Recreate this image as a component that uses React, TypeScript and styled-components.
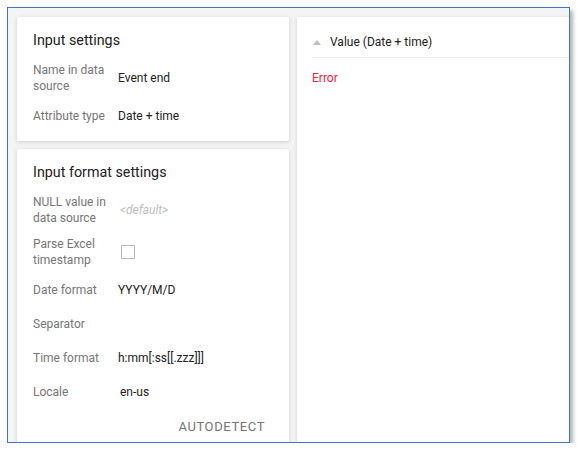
import React from "react";
import styled, { createGlobalStyle } from "styled-components";

const GlobalStyle = createGlobalStyle`
  html, body {
    margin: 0;
    padding: 0;
    background: #ffffff;
    font-family: Roboto, "Liberation Sans", Arial, sans-serif;
  }
`;

const Frame = styled.div`
  box-sizing: border-box;
  margin: 7px 0 0 7px;
  width: 563px;
  height: 436px;
  border: 1px solid #4472c4;
  box-shadow: 3px 3px 4px rgba(0, 0, 0, 0.3);
  background: #f4f4f4;
  overflow: hidden;
  display: flex;
  gap: 8px;
  padding: 9px 0 0 9px;
`;

const LeftColumn = styled.div`
  width: 272px;
  flex-shrink: 0;
  display: flex;
  flex-direction: column;
  gap: 8px;
`;

const Card = styled.section`
  background: #ffffff;
  border-radius: 2px;
  box-shadow: 0 1px 4px rgba(0, 0, 0, 0.16);
  padding: 13px 16px 8px 16px;
  flex-shrink: 0;
`;

const CardTitle = styled.h2`
  margin: 0 0 7px 0;
  font-size: 14.3px;
  line-height: 20px;
  font-weight: 400;
  color: #212121;
`;

const Row = styled.div<{ $tall?: boolean }>`
  display: flex;
  align-items: center;
  height: ${(p) => (p.$tall ? 42 : 34)}px;
  font-size: 12px;
  line-height: 16px;
`;

const Label = styled.div`
  width: 85px;
  flex-shrink: 0;
  color: #757575;
`;

const Value = styled.div<{ $muted?: boolean; $shift?: number }>`
  color: ${(p) => (p.$muted ? "#bdbdbd" : "#212121")};
  font-style: ${(p) => (p.$muted ? "italic" : "normal")};
  padding-left: ${(p) => p.$shift ?? 0}px;
`;

const Checkbox = styled.span`
  display: inline-block;
  box-sizing: border-box;
  width: 14px;
  height: 14px;
  margin-left: 3px;
  border: 1.5px solid #b4b4b4;
  border-radius: 1px;
`;

const ButtonRow = styled.div`
  display: flex;
  justify-content: flex-end;
  align-items: center;
  height: 34px;
  padding-right: 8px;
`;

const TextButton = styled.button`
  border: none;
  background: none;
  padding: 0;
  font-family: inherit;
  font-size: 13px;
  letter-spacing: 0.6px;
  color: #757575;
  text-transform: uppercase;
  cursor: pointer;
`;

const Panel = styled.section`
  flex: 1;
  background: #ffffff;
  box-shadow: 0 1px 4px rgba(0, 0, 0, 0.16);
  padding: 0 0 0 15px;
`;

const ColumnHeader = styled.div`
  box-sizing: border-box;
  height: 41px;
  padding-top: 10px;
  display: flex;
  align-items: center;
  gap: 9px;
  border-bottom: 1px solid #ececec;
  font-size: 12px;
  color: #212121;
`;

const SortIcon = styled.svg`
  width: 8px;
  height: 5px;
  margin-left: 1px;
`;

const ErrorText = styled.div`
  margin-top: 12px;
  font-size: 12px;
  line-height: 16px;
  color: #f2223f;
`;

export default function App() {
  return (
    <>
      <GlobalStyle />
      <Frame>
        <LeftColumn>
          <Card>
            <CardTitle>Input settings</CardTitle>
            <Row $tall>
              <Label>Name in data source</Label>
              <Value>Event end</Value>
            </Row>
            <Row>
              <Label>Attribute type</Label>
              <Value>Date + time</Value>
            </Row>
          </Card>
          <Card>
            <CardTitle>Input format settings</CardTitle>
            <Row $tall>
              <Label>NULL value in data source</Label>
              <Value $muted $shift={2}>&lt;default&gt;</Value>
            </Row>
            <Row $tall>
              <Label>Parse Excel timestamp</Label>
              <Checkbox />
            </Row>
            <Row>
              <Label>Date format</Label>
              <Value>YYYY/M/D</Value>
            </Row>
            <Row>
              <Label>Separator</Label>
              <Value />
            </Row>
            <Row>
              <Label>Time format</Label>
              <Value>h:mm[:ss[[.zzz]]]</Value>
            </Row>
            <Row>
              <Label>Locale</Label>
              <Value $shift={2}>en-us</Value>
            </Row>
            <ButtonRow>
              <TextButton>Autodetect</TextButton>
            </ButtonRow>
          </Card>
        </LeftColumn>
        <Panel>
          <ColumnHeader>
            <SortIcon viewBox="0 0 8 5">
              <path d="M0 5 L4 0 L8 5 Z" fill="#bdbdbd" />
            </SortIcon>
            <span>Value (Date + time)</span>
          </ColumnHeader>
          <ErrorText>Error</ErrorText>
        </Panel>
      </Frame>
    </>
  );
}
